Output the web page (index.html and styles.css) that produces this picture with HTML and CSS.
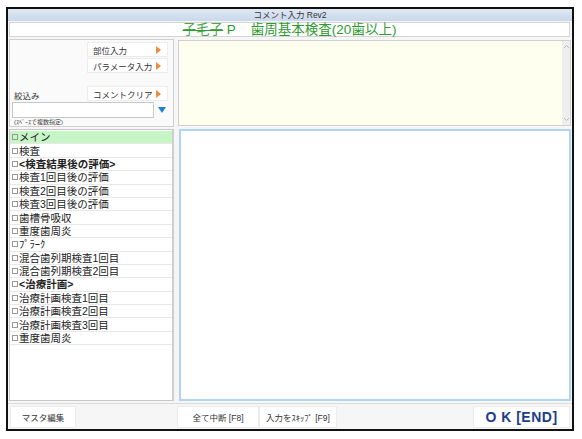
FILE: index.html
```html
<!DOCTYPE html>
<html lang="ja">
<head>
<meta charset="utf-8">
<title>コメント入力 Rev2</title>
<link rel="stylesheet" href="styles.css">
</head>
<body>
<div class="win">
  <div class="titlebar">コメント入力 Rev2</div>
  <div class="header"><span class="name">子毛子</span>&nbsp;P&nbsp;&nbsp;&nbsp;&nbsp;歯周基本検査(20歯以上)</div>
  <div class="main">
    <div class="left">
      <div class="ctrl">
        <div class="btns">
          <div class="abtn"><span>部位入力</span><i class="tri"></i></div>
          <div class="abtn"><span>パラメータ入力</span><i class="tri"></i></div>
        </div>
        <div class="filterhead">
          <span class="lbl">絞込み</span>
          <div class="abtn"><span>コメントクリア</span><i class="tri"></i></div>
        </div>
        <div class="filterrow">
          <div class="input"></div>
          <i class="down"></i>
        </div>
        <div class="hint">(ｽﾍﾟｰｽで複数指定)</div>
      </div>
      <div class="list">
        <div class="row sel"><i class="cb"></i>メイン</div>
        <div class="row"><i class="cb"></i>検査</div>
        <div class="row b"><i class="cb"></i>&lt;検査結果後の評価&gt;</div>
        <div class="row"><i class="cb"></i>検査1回目後の評価</div>
        <div class="row"><i class="cb"></i>検査2回目後の評価</div>
        <div class="row"><i class="cb"></i>検査3回目後の評価</div>
        <div class="row"><i class="cb"></i>歯槽骨吸収</div>
        <div class="row"><i class="cb"></i>重度歯周炎</div>
        <div class="row"><i class="cb"></i>ﾌﾟﾗｰｸ</div>
        <div class="row"><i class="cb"></i>混合歯列期検査1回目</div>
        <div class="row"><i class="cb"></i>混合歯列期検査2回目</div>
        <div class="row b"><i class="cb"></i>&lt;治療計画&gt;</div>
        <div class="row"><i class="cb"></i>治療計画検査1回目</div>
        <div class="row"><i class="cb"></i>治療計画検査2回目</div>
        <div class="row"><i class="cb"></i>治療計画検査3回目</div>
        <div class="row"><i class="cb"></i>重度歯周炎</div>
      </div>
    </div>
    <div class="right">
      <div class="memo">
        <div class="vscroll">
          <svg width="7" height="5" viewBox="0 0 7 5"><path d="M1 4 L3.5 1.5 L6 4" fill="none" stroke="#bbb" stroke-width="1"/></svg>
          <svg width="7" height="5" viewBox="0 0 7 5"><path d="M1 1 L3.5 3.5 L6 1" fill="none" stroke="#bbb" stroke-width="1"/></svg>
        </div>
      </div>
      <div class="edit"></div>
    </div>
  </div>
  <div class="footer">
    <div class="fbtn master">マスタ編集</div>
    <div class="fmid">
      <div class="fbtn stop">全て中断 [F8]</div>
      <div class="fbtn skip">入力をｽｷｯﾌﾟ [F9]</div>
    </div>
    <div class="fbtn ok">O&nbsp;K&nbsp;[END]</div>
  </div>
</div>
</body>
</html>
```

FILE: styles.css
```css
* { box-sizing: border-box; }
html, body {
  margin: 0;
  padding: 0;
  background: #ffffff;
  width: 582px;
  height: 439px;
  overflow: hidden;
}
body {
  font-family: "Liberation Sans", "Noto Sans CJK JP", sans-serif;
  color: #222;
}
.win {
  margin: 7px 0 0 6px;
  width: 568px;
  height: 424px;
  border: 2px solid #111;
  background: #f6f6f6;
  display: flex;
  flex-direction: column;
}
.titlebar {
  height: 12px;
  background: linear-gradient(#dfe8f3, #c9d8ea);
  font-size: 8.5px;
  line-height: 12px;
  text-align: center;
  color: #333;
}
.header {
  height: 15px;
  margin: 1px 2px 0 1px;
  background: #fff;
  border: 1px solid #d4d4d4;
  color: #2f9a2f;
  font-size: 13.5px;
  line-height: 13px;
  text-align: center;
  white-space: nowrap;
}
.name {
  display: inline-block;
  line-height: 13px;
  color: #4aa84a;
  text-decoration: line-through;
  text-decoration-color: #2f9a2f;
  text-decoration-thickness: 1px;
  text-decoration-skip-ink: none;
}
.main {
  flex: 1;
  display: flex;
  gap: 4px;
  padding: 2px 1px 0 1px;
  min-height: 0;
}
.left {
  width: 165px;
  display: flex;
  flex-direction: column;
  gap: 2px;
}
.ctrl {
  height: 88px;
  border: 1px solid #cfcfcf;
  background: #fafafa;
  padding: 2px 5px 0 2px;
  display: flex;
  flex-direction: column;
}
.btns {
  display: flex;
  flex-direction: column;
  align-items: flex-end;
  gap: 1px;
}
.abtn {
  width: 81px;
  height: 15px;
  background: #fff;
  border: 1px solid #ececec;
  display: flex;
  align-items: center;
  justify-content: space-between;
  padding: 0 6px 0 5px;
  font-size: 8.5px;
  color: #333;
}
.tri {
  width: 0;
  height: 0;
  border-top: 4px solid transparent;
  border-bottom: 4px solid transparent;
  border-left: 5px solid #f08a3c;
}
.filterhead {
  margin-top: 13px;
  display: flex;
  justify-content: space-between;
  align-items: flex-end;
}
.lbl {
  font-size: 8.5px;
  color: #333;
  padding-left: 2px;
  line-height: 10px;
}
.filterrow {
  display: flex;
  align-items: center;
  gap: 2px;
  margin-top: 1px;
}
.input {
  width: 142px;
  height: 16px;
  background: #fff;
  border: 1px solid #c8c8c8;
}
.down {
  width: 0;
  height: 0;
  border-left: 4px solid transparent;
  border-right: 4px solid transparent;
  border-top: 6px solid #1e82d8;
  margin-left: 2px;
}
.hint {
  font-size: 6px;
  color: #444;
  line-height: 9px;
  padding-left: 2px;
}
.list {
  flex: 1;
  border: 1px solid #c8c8c8;
  border-right: 2px solid #cfcfcf;
  background: #fff;
  padding-top: 1px;
}
.row {
  height: 13.4px;
  line-height: 12px;
  font-size: 10.5px;
  color: #222;
  border-bottom: 1px solid #e8e8e8;
  display: flex;
  align-items: center;
  white-space: nowrap;
  overflow: hidden;
}
.row.sel { background: #c6f5c6; }
.row.b { font-weight: bold; }
.cb {
  width: 6px;
  height: 6px;
  border: 1px solid #999;
  margin: 0 1px 0 2px;
  flex: none;
}
.right {
  flex: 1;
  display: flex;
  flex-direction: column;
  gap: 3px;
  padding-top: 1px;
}
.memo {
  height: 86px;
  background: #fffff0;
  border: 1px solid #d0d0d0;
  display: flex;
  justify-content: flex-end;
}
.vscroll {
  width: 8px;
  background: #eeeeee;
  display: flex;
  flex-direction: column;
  justify-content: space-between;
  align-items: center;
  padding: 3px 0;
}
.edit {
  flex: 1;
  background: #fff;
  border: 2px solid #b0d4f4;
  margin-left: 1px;
}
.footer {
  height: 26px;
  display: flex;
  align-items: center;
  padding: 1px 2px 1px 2px;
  border-top: 1px solid #dcdcdc;
  margin-top: 2px;
  gap: 0;
}
.fbtn {
  height: 22px;
  background: #fff;
  border: 1px solid #ececec;
  font-size: 8.5px;
  color: #333;
  display: flex;
  align-items: center;
  justify-content: center;
}
.master { width: 66px; }
.fmid {
  display: flex;
  margin-left: 101px;
  flex: 1;
}
.stop { width: 82px; }
.skip { width: 78px; }
.ok {
  width: 97px;
  font-size: 14px;
  font-weight: bold;
  color: #1c3c8c;
  letter-spacing: 0.5px;
}
```
